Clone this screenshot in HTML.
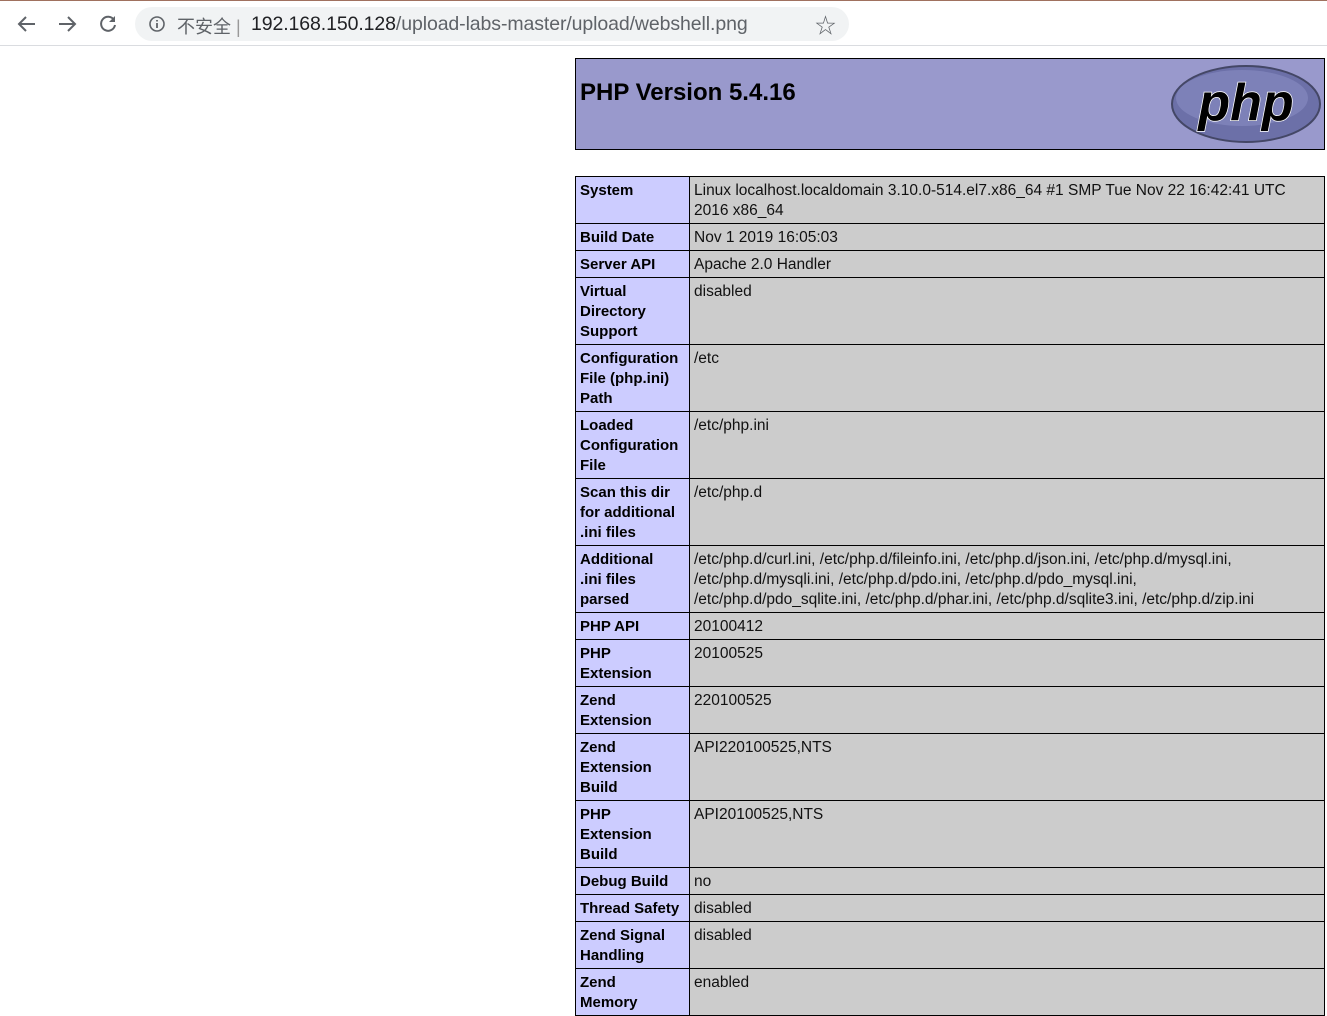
<!DOCTYPE html>
<html><head><meta charset="utf-8"><style>
*{margin:0;padding:0;box-sizing:border-box}
body{width:1327px;height:988px;overflow:hidden;background:#fff;font-family:"Liberation Sans","Noto Sans CJK SC",sans-serif;position:relative}
.topline{position:absolute;left:0;top:0;width:1327px;height:1px;background:#a0715f}
.bar{position:absolute;left:0;top:1px;width:1327px;height:45px;background:#fff;border-bottom:1px solid #dadce0}
.omni{position:absolute;left:135px;top:6px;width:714px;height:34px;border-radius:17px;background:#f1f3f4}
.url{position:absolute;left:251px;top:12px;font-size:19.5px;color:#202124;letter-spacing:-0.1px}
.sec{position:absolute;left:177px;top:12px;font-size:18px;color:#5f6368}
.hdr{position:absolute;left:575px;top:58px;width:750px;height:92px;background:#9999cc;border:1px solid #000}
.hdr h1{position:absolute;left:4px;top:20px;font-size:24px;font-weight:bold;color:#000}
.tbl{position:absolute;left:575px;top:176px;width:750px;border:1px solid #000;border-bottom:none}
.r{display:flex;border-bottom:1px solid #000;font-size:15px;line-height:20px}
.l{width:114px;background:#ccccff;font-weight:bold;padding:4px 0 0 4px;border-right:1px solid #000;color:#000}
.v{flex:1;background:#cccccc;padding:4px 0 0 4px;color:#111;white-space:nowrap;font-size:15.5px}
</style></head><body>
<div class="topline"></div>
<div class="bar">
<svg style="position:absolute;left:16px;top:13px" width="22" height="20" viewBox="0 0 22 20"><path d="M19 10H4M10 3L3 10l7 7" stroke="#5f6368" stroke-width="2" fill="none"/></svg>
<svg style="position:absolute;left:56px;top:13px" width="22" height="20" viewBox="0 0 22 20"><path d="M3 10h15M12 3l7 7-7 7" stroke="#5f6368" stroke-width="2" fill="none"/></svg>
<svg style="position:absolute;left:97px;top:12px" width="22" height="22" viewBox="0 0 22 22"><path d="M17 7A7 7 0 1 0 18 12" stroke="#5f6368" stroke-width="2" fill="none"/><path d="M18 3v6h-6z" fill="#5f6368"/></svg>
<div class="omni"></div>
<svg style="position:absolute;left:148px;top:14px" width="18" height="18" viewBox="0 0 18 18"><circle cx="9" cy="9" r="7" stroke="#5f6368" stroke-width="1.6" fill="none"/><path d="M9 8v5M9 5v1.5" stroke="#5f6368" stroke-width="1.8"/></svg>
<div class="sec">不安全 <span style="color:#999">|</span></div>
<div class="url">192.168.150.128<span style="color:#5f6368">/upload-labs-master/upload/webshell.png</span></div>
<div style="position:absolute;left:815px;top:9px;font-size:21px;color:#5f6368">☆</div>
</div>
<div class="hdr"><h1>PHP Version 5.4.16</h1>
<svg style="position:absolute;left:594px;top:5px" width="152" height="80" viewBox="0 0 152 80"><ellipse cx="76" cy="40" rx="74" ry="38" fill="#6c70a8" stroke="#444766" stroke-width="2"/><ellipse cx="72" cy="34" rx="66" ry="28" fill="#7d81b8"/><text x="76" y="56" text-anchor="middle" font-family="Liberation Sans" font-weight="bold" font-style="italic" font-size="52" fill="#000" stroke="#fff" stroke-width="1.5" paint-order="stroke">php</text></svg>
</div>
<div class="tbl">
<div class="r" style="height:47px"><div class="l">System</div><div class="v">Linux localhost.localdomain 3.10.0-514.el7.x86_64 #1 SMP Tue Nov 22 16:42:41 UTC<br>2016 x86_64</div></div>
<div class="r" style="height:27px"><div class="l">Build Date</div><div class="v">Nov 1 2019 16:05:03</div></div>
<div class="r" style="height:27px"><div class="l">Server API</div><div class="v">Apache 2.0 Handler</div></div>
<div class="r" style="height:67px"><div class="l">Virtual<br>Directory<br>Support</div><div class="v">disabled</div></div>
<div class="r" style="height:67px"><div class="l">Configuration<br>File (php.ini)<br>Path</div><div class="v">/etc</div></div>
<div class="r" style="height:67px"><div class="l">Loaded<br>Configuration<br>File</div><div class="v">/etc/php.ini</div></div>
<div class="r" style="height:67px"><div class="l">Scan this dir<br>for additional<br>.ini files</div><div class="v">/etc/php.d</div></div>
<div class="r" style="height:67px"><div class="l">Additional<br>.ini files<br>parsed</div><div class="v">/etc/php.d/curl.ini, /etc/php.d/fileinfo.ini, /etc/php.d/json.ini, /etc/php.d/mysql.ini,<br>/etc/php.d/mysqli.ini, /etc/php.d/pdo.ini, /etc/php.d/pdo_mysql.ini,<br>/etc/php.d/pdo_sqlite.ini, /etc/php.d/phar.ini, /etc/php.d/sqlite3.ini, /etc/php.d/zip.ini</div></div>
<div class="r" style="height:27px"><div class="l">PHP API</div><div class="v">20100412</div></div>
<div class="r" style="height:47px"><div class="l">PHP<br>Extension</div><div class="v">20100525</div></div>
<div class="r" style="height:47px"><div class="l">Zend<br>Extension</div><div class="v">220100525</div></div>
<div class="r" style="height:67px"><div class="l">Zend<br>Extension<br>Build</div><div class="v">API220100525,NTS</div></div>
<div class="r" style="height:67px"><div class="l">PHP<br>Extension<br>Build</div><div class="v">API20100525,NTS</div></div>
<div class="r" style="height:27px"><div class="l">Debug Build</div><div class="v">no</div></div>
<div class="r" style="height:27px"><div class="l">Thread Safety</div><div class="v">disabled</div></div>
<div class="r" style="height:47px"><div class="l">Zend Signal<br>Handling</div><div class="v">disabled</div></div>
<div class="r" style="height:47px"><div class="l">Zend<br>Memory</div><div class="v">enabled</div></div>
</div>
</body></html>
